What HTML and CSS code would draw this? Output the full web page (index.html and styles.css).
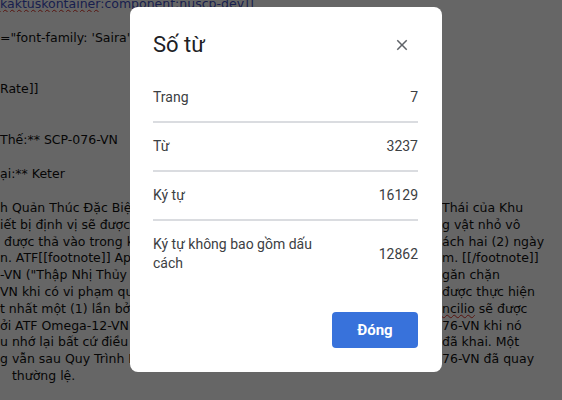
FILE: index.html
```html
<!DOCTYPE html>
<html lang="vi">
<head>
  <meta charset="UTF-8" />
  <meta name="viewport" content="width=device-width, initial-scale=1.0" />
  <title>Số từ</title>
  <link rel="stylesheet" href="styles.css">
</head>
<body>
  <div class="doc">
    <p class="line code"><span class="typo">kaktuskontainer</span>:component:nuscp-dev]]</p>
    <p class="line gap-s">="font-family: 'Saira', sans-serif; font-size: 120%;"</p>
    <p class="line gap-l">Rate]]</p>
    <p class="line gap-l">Thế:** SCP-076-VN</p>
    <p class="line gap-s">ại:** Keter</p>

    <div class="para gap-s">
      <div class="row"><span class="left">h Quản Thúc Đặc Biệt: Mọi Trạng</span><span class="right">Thái của Khu</span></div>
      <div class="row"><span class="left">iết bị định vị sẽ được cấy vào những sinh</span><span class="right">g vật nhỏ vô</span></div>
      <div class="row"><span class="left">&nbsp;được thả vào trong khu vực cách ly</span><span class="right">ách hai (2) ngày</span></div>
      <div class="row"><span class="left">n. ATF[[footnote]] Applied Task Force</span><span class="right">m. [[/footnote]]</span></div>
      <div class="row"><span class="left">-VN ("Thập Nhị Thủy Thần") chịu trách nhiệm</span><span class="right">găn chặn</span></div>
      <div class="row"><span class="left">VN khi có vi phạm quản thúc. Kiểm tra sẽ</span><span class="right">được thực hiện</span></div>
      <div class="row"><span class="left">t nhất một (1) lần bởi nhân viên. Con</span><span class="right"><span class="typo">ncilio</span> sẽ được</span></div>
      <div class="row"><span class="left">ởi ATF Omega-12-VN để vô hiệu hóa SCP-0</span><span class="right">76-VN khi nó</span></div>
      <div class="row"><span class="left">u nhớ lại bất cứ điều gì nó</span><span class="right">đã khai. Một</span></div>
      <div class="row"><span class="left">g vẫn sau Quy Trình Reset, SCP-0</span><span class="right">76-VN đã quay</span></div>
      <div class="row"><span class="left">&nbsp;&nbsp;&nbsp;thường lệ.</span><span class="right"></span></div>
    </div>
  </div>

  <div class="scrim">
    <div class="dialog" role="dialog" aria-labelledby="dlgTitle">
      <div class="dialog-head">
        <h1 id="dlgTitle">Số từ</h1>
        <button class="close-btn" aria-label="Đóng">
          <svg width="18" height="18" viewBox="0 0 24 24"><path d="M19 6.41L17.59 5 12 10.59 6.41 5 5 6.41 10.59 12 5 17.59 6.41 19 12 13.41 17.59 19 19 17.59 13.41 12z" fill="#5f6368"/></svg>
        </button>
      </div>

      <div class="stats">
        <div class="stat"><span class="stat-label">Trang</span><span class="stat-value">7</span></div>
        <div class="stat"><span class="stat-label">Từ</span><span class="stat-value">3237</span></div>
        <div class="stat"><span class="stat-label">Ký tự</span><span class="stat-value">16129</span></div>
        <div class="stat"><span class="stat-label">Ký tự không bao gồm dấu cách</span><span class="stat-value">12862</span></div>
      </div>

      <div class="dialog-foot">
        <button class="primary-btn">Đóng</button>
      </div>
    </div>
  </div>
</body>
</html>
```

FILE: styles.css
```css
html, body {
  margin: 0;
  padding: 0;
  width: 562px;
  height: 400px;
  overflow: hidden;
  background: #fff;
}
.doc {
  margin-top: -5px;
  font-family: "DejaVu Sans", Verdana, sans-serif;
  font-size: 12.5px;
  line-height: 17px;
  color: #111;
}
.line {
  margin: 0;
  white-space: nowrap;
  overflow: hidden;
}
.gap-s {
  margin-top: 17px;
}
.gap-l {
  margin-top: 34px;
}
.code {
  color: #3d4fc4;
}
.typo {
  text-decoration: underline wavy #d93025;
  text-decoration-thickness: 1px;
}
.para .row {
  display: grid;
  grid-template-columns: 442px auto;
  white-space: nowrap;
  height: 16.8px;
}
.para .left {
  overflow: hidden;
}

/* dialog */
.scrim {
  position: fixed;
  inset: 0;
  background: rgba(0, 0, 0, 0.6);
  padding: 7px 0 0 130px;
}
.dialog {
  width: 312px;
  box-sizing: border-box;
  padding: 24px 24px 24px 23px;
  background: #fff;
  border-radius: 8px;
  font-family: Roboto, "Noto Sans", sans-serif;
  color: #3c4043;
}
.dialog-head {
  display: flex;
  align-items: center;
  justify-content: space-between;
  height: 28px;
}
.dialog-head h1 {
  margin: 0;
  font-size: 22px;
  font-weight: 400;
  line-height: 28px;
  color: #202124;
}
.close-btn {
  width: 24px;
  height: 24px;
  margin-right: 4px;
  padding: 0;
  border: none;
  background: none;
  display: flex;
  align-items: center;
  justify-content: center;
}
.stats {
  margin-top: 15px;
}
.stat {
  display: flex;
  align-items: center;
  justify-content: space-between;
  padding: 14px 0;
  font-size: 14px;
  line-height: 19px;
  border-bottom: 2px solid #dadce0;
}
.stat:last-child {
  border-bottom: none;
}
.stat-label {
  max-width: 176px;
}
.dialog-foot {
  display: flex;
  justify-content: flex-end;
  margin-top: 25px;
}
.primary-btn {
  width: 86px;
  height: 36px;
  border: none;
  border-radius: 4px;
  background: #3872db;
  color: #fff;
  font-family: Roboto, "Noto Sans", sans-serif;
  font-size: 15px;
  font-weight: 700;
}
```
